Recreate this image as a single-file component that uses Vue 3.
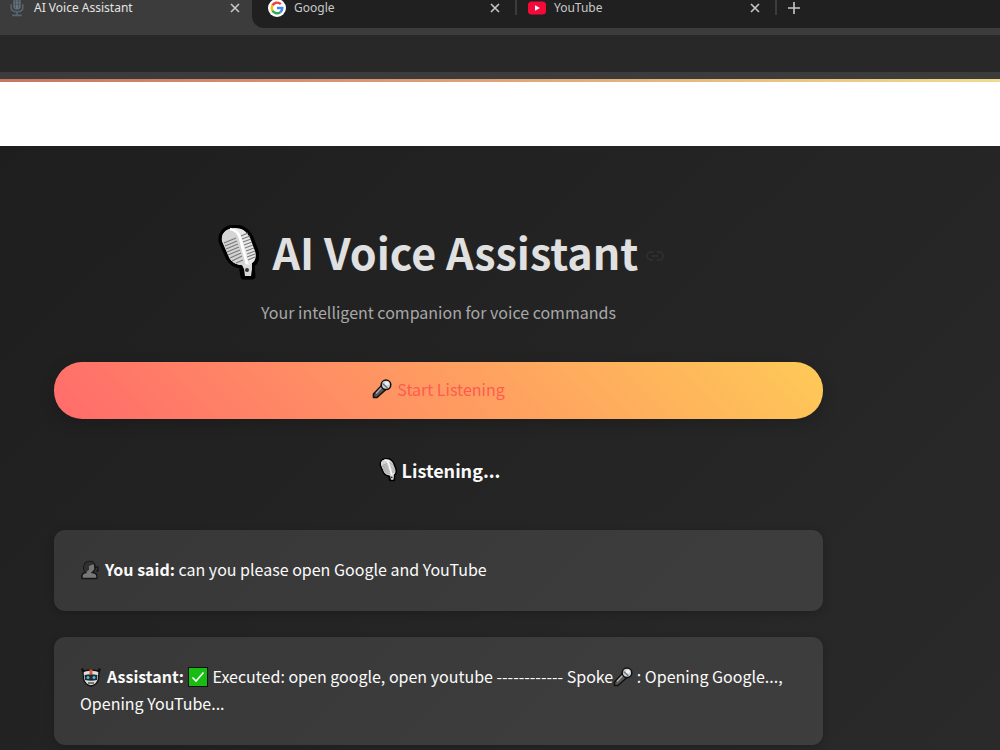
<template>
  <div class="app">
    <svg class="sprite" aria-hidden="true">
      <symbol id="studio-mic" viewBox="0 0 46 56">
        <path d="M9 16C8 8 14 3 22 3C30 3 34 7 37 13L42 26C44 32 42 37 38 40L39 51H31L29 40C22 40 18 36 16 32Z" fill="#000" stroke="#000" stroke-width="7" stroke-linejoin="round" />
        <path d="M28 38L39 37V44L38 51H32L31 44Z" fill="#d9d9d9" />
        <path d="M9 16C8 8 14 3 22 3C30 3 34 7 37 13L42 26C44 32 42 37 38 39C35 41 32 41 29 40C22 40 18 36 16 32Z" fill="#e8e8e8" />
        <path d="M9 16C8 9 12 5 17 4C22 5 25 10 26 15L33 40C24 41 18 37 16 32Z" fill="#d4d4d4" />
        <path d="M11 18L23 13M12 21L24 16M13 24L25 19M14 27L26 22M15 30L27 25M17 33L28 28M19 36L29 31M23 38L30 35M28 11L35 8M29 14L37 11M30 17L38 14M31 20L39 17M32 23L40 20M33 26L41 23M34 29L42 26M34 32L42 29M35 35L42 32" fill="none" stroke="#7c7c7c" stroke-width="1.200" />
        <path d="M17 4C23 5 26 9 27 13L34 39" fill="none" stroke="#fff" stroke-width="2.500" />
        <circle cx="34" cy="45" r="2" fill="#333" />
      </symbol>
      <symbol id="hand-mic" viewBox="0 0 20 20">
        <path d="M11 5L1.500 15V18.500H5L15 9.500Z" fill="#555" stroke="#111" stroke-width="1.600" stroke-linejoin="round" />
        <path d="M11 7L4 14.500" stroke="#aaa" stroke-width="1.600" />
        <circle cx="14" cy="5.800" r="4.800" fill="#cfd2d4" stroke="#111" stroke-width="1.500" />
        <path d="M10.500 4.500L15.500 9" stroke="#687078" stroke-width="1.300" />
        <circle cx="15" cy="4.500" r="1.800" fill="#f2f2f2" />
      </symbol>
    </svg>

    <header class="browser">
      <div class="tab-strip">
        <div class="tab active">
          <svg class="tab-icon" viewBox="0 0 17 17">
            <rect x="5" y="-3" width="7" height="13" rx="3.500" fill="#667580" />
            <path d="M3 5V8Q3 12 8.500 12Q14 12 14 8V5M8.500 12V15M4 15.500H13" fill="none" stroke="#566570" stroke-width="1.500" />
            <path d="M5 2H12M5 5H12M7 0V9M10 0V9" stroke="#44525c" stroke-width="0.800" />
          </svg>
          <span class="tab-title">AI Voice Assistant</span>
          <button class="icon-button" aria-label="Close AI Voice Assistant">
            <svg viewBox="0 0 10 10"><path d="M1 1L9 9M9 1L1 9" /></svg>
          </button>
        </div>
        <div class="tab-group">
          <div class="tab">
            <svg class="tab-icon" viewBox="0 0 18 18">
              <circle cx="9" cy="9" r="9" fill="#fff" />
              <g fill="none" stroke-width="2.400">
                <path d="M12.800 5.200A5.300 5.300 0 0 0 4.400 6.400" stroke="#ea4335" />
                <path d="M4.400 6.400A5.300 5.300 0 0 0 4.400 11.600" stroke="#fbbc05" />
                <path d="M4.400 11.600A5.300 5.300 0 0 0 12.400 13.100" stroke="#34a853" />
                <path d="M12.400 13.100A5.300 5.300 0 0 0 14.300 9H9" stroke="#4285f4" />
              </g>
            </svg>
            <span class="tab-title">Google</span>
            <button class="icon-button" aria-label="Close Google">
              <svg viewBox="0 0 10 10"><path d="M1 1L9 9M9 1L1 9" /></svg>
            </button>
          </div>
          <div class="tab">
            <svg class="tab-icon" viewBox="0 0 18 18">
              <rect y="2.500" width="18" height="13" rx="3.500" fill="#f5093a" />
              <path d="M7 6.200L12 9L7 11.800Z" fill="#fff" />
            </svg>
            <span class="tab-title">YouTube</span>
            <button class="icon-button" aria-label="Close YouTube">
              <svg viewBox="0 0 10 10"><path d="M1 1L9 9M9 1L1 9" /></svg>
            </button>
          </div>
          <button class="icon-button new-tab" aria-label="New tab">
            <svg viewBox="0 0 12 12"><path d="M6 0V12M0 6H12" /></svg>
          </button>
        </div>
      </div>
      <div class="toolbar"></div>
    </header>
    <div class="decoration"></div>
    <div class="page-header"></div>

    <main class="assistant">
      <h1 class="title">
        <svg class="title-mic"><use href="#studio-mic" /></svg>
        <span class="title-text">AI Voice Assistant</span>
        <a class="anchor" href="#" aria-label="Link to heading">
          <svg viewBox="0 0 18 12">
            <path d="M7 10H5A4 4 0 0 1 5 2H7M11 2H13A4 4 0 0 1 13 10H11M6 6H12" />
          </svg>
        </a>
      </h1>
      <p class="subtitle">Your intelligent companion for voice commands</p>

      <button class="listen-button" @click="listening = true">
        <svg class="emoji"><use href="#hand-mic" /></svg>
        <span>Start Listening</span>
      </button>

      <h3 class="status" v-if="listening">
        <svg class="emoji"><use href="#studio-mic" /></svg>
        <span>Listening...</span>
      </h3>

      <div class="card">
        <svg class="emoji lead" viewBox="0 0 20 20">
          <path d="M2 18.500V16Q2 13 6 12.500Q3 10 4 6Q5 1.500 10 1.500Q14 1.500 15 6V9Q14 12 12 12.500Q17 13 17 16V18.500Z" fill="#777" stroke="#161616" stroke-width="1.500" stroke-linejoin="round" />
          <path d="M4 7Q4 2 9.500 1.500Q13 1.500 14 4L9 6V10L6 12Q3.500 10 4 7Z" fill="#303030" />
          <path d="M14 7H18V11H16" fill="none" stroke="#181818" stroke-width="1.500" />
        </svg>
        <strong>You said:</strong> {{ command }}
      </div>

      <div class="card">
        <svg class="emoji lead robot" viewBox="0 0 22 20">
          <path d="M2 1.500L5 8M20 1.500L17 8" stroke="#111" stroke-width="2.500" />
          <path d="M3 5Q5 3 11 3Q17 3 19 5L18.500 12Q17 18 11 19Q5 18 3.500 12Z" fill="#ddd" stroke="#111" stroke-width="1.300" />
          <path d="M9.500 2.500H12.500V7H9.500Z" fill="#e65234" />
          <path d="M4.500 8Q11 6.500 17.500 8L17 13Q11 14.500 5 13Z" fill="#22282c" />
          <circle cx="8" cy="10.500" r="1.500" fill="#49b9de" />
          <circle cx="14" cy="10.500" r="1.500" fill="#49b9de" />
          <path d="M8 16H14" stroke="#333" stroke-width="1.200" />
        </svg>
        <strong>Assistant:</strong>
        <svg class="emoji check" viewBox="0 0 20 20">
          <rect x="0.500" y="0.500" width="19" height="19" fill="#17bd12" stroke="#111" />
          <path d="M4.500 10.500L8 14L15.500 5.500" fill="none" stroke="#fff" stroke-width="1.600" />
        </svg>
        Executed: open google, open youtube ------------ Spoke<svg class="emoji"><use href="#hand-mic" /></svg>
        : Opening Google..., Opening YouTube...
      </div>
    </main>
  </div>
</template>

<script setup>
import { ref } from 'vue'

const listening = ref(true)
const command = ref('can you please open Google and YouTube')
</script>

<style>
body {
  margin: 0;
}
</style>

<style scoped>
.app {
  min-height: 100vh;
  display: flex;
  flex-direction: column;
  font-family: "Noto Sans CJK SC", "Noto Sans", sans-serif;
  color: #fafafa;
  background: #202020;
}

.sprite {
  display: block;
  width: 0;
  height: 0;
}

.browser {
  background: #3c3c3c;
  padding-bottom: 7px;
}

.tab-strip {
  display: flex;
  height: 28px;
  font-family: "Noto Sans", "Open Sans", sans-serif;
  font-size: 12px;
  line-height: 15px;
}

.tab {
  display: flex;
  align-items: center;
  box-sizing: border-box;
  width: 257px;
  height: 15px;
  margin-right: 3px;
  padding: 0 15px 0 8px;
  border-right: 2px solid #3c3c3c;
  color: #c8c8c8;
}

.tab.active {
  width: 252px;
  margin-right: 0;
  padding-right: 12px;
  border-right: 0;
  color: #e4e4e4;
}

.tab-icon {
  width: 18px;
  height: 18px;
  margin-right: 8px;
  flex-shrink: 0;
  overflow: visible;
}

.tab-title {
  flex: 1;
}

.tab-group {
  display: flex;
  flex: 1;
  padding-left: 8px;
  background: #202020;
  border-bottom-left-radius: 12px;
}

.icon-button {
  display: flex;
  padding: 0;
  border: 0;
  background: none;
  cursor: pointer;
}

.icon-button svg {
  width: 10px;
  height: 10px;
  fill: none;
  stroke: #c8c8c8;
  stroke-width: 1.6;
}

.new-tab {
  height: 15px;
  align-items: center;
  padding-left: 8px;
}

.new-tab svg {
  width: 12px;
  height: 12px;
}

.toolbar {
  height: 37px;
  margin-top: 7px;
  background: #282828;
}

.decoration {
  height: 3px;
  background: linear-gradient(90deg, #c97564, #e0a477 50%, #f0dc8c);
}

.page-header {
  height: 64px;
  background: #fff;
}

.assistant {
  flex: 1;
  padding: 77px 177px 5px 54px;
  background: linear-gradient(135deg, #1e1e1e, #2a2a2a);
  font-size: 16px;
  line-height: 27px;
}

.title {
  display: flex;
  justify-content: center;
  align-items: center;
  margin: 0 0 16px;
  font-size: 43px;
  font-weight: 700;
  line-height: 60px;
  color: #e0e0e0;
}

.title-mic {
  width: 46px;
  height: 56px;
  margin-right: 14px;
}

.title-text {
  margin-bottom: 4px;
  line-height: 56px;
}

.anchor {
  display: flex;
  margin-left: 8px;
  padding-top: 6px;
}

.anchor svg {
  width: 18px;
  height: 12px;
  fill: none;
  stroke: #2e2e2e;
  stroke-width: 2;
}

.subtitle {
  margin: 0 0 36px;
  text-align: center;
  color: #a8a8a8;
}

.listen-button {
  display: flex;
  justify-content: center;
  align-items: center;
  gap: 5px;
  width: 100%;
  height: 57px;
  padding: 0 0 3px;
  border: 0;
  border-radius: 28px;
  background: linear-gradient(45deg, #ff6b6b, #feca57);
  box-shadow: 0 4px 15px rgba(0, 0, 0, 0.2);
  color: #ff5a50;
  font-family: inherit;
  font-size: 16px;
  cursor: pointer;
}

.emoji {
  width: 20px;
  height: 20px;
  vertical-align: -4px;
}

.lead {
  margin-right: 5px;
}

.check {
  margin: 0 1px 0 4px;
}

.status {
  display: flex;
  justify-content: center;
  align-items: center;
  gap: 5px;
  margin: 36px 0 45px;
  font-size: 18px;
  font-weight: 700;
  line-height: 30px;
}

.status .emoji {
  height: 24px;
}

.card {
  margin-bottom: 26px;
  padding: 26px 26px 28px;
  border-radius: 11px;
  background: rgba(255, 255, 255, 0.1);
  box-shadow: 0 2px 8px rgba(0, 0, 0, 0.2);
}

.card:last-child {
  margin-bottom: 0;
}

.card strong {
  font-weight: 600;
}

.robot {
  width: 22px;
}
</style>
